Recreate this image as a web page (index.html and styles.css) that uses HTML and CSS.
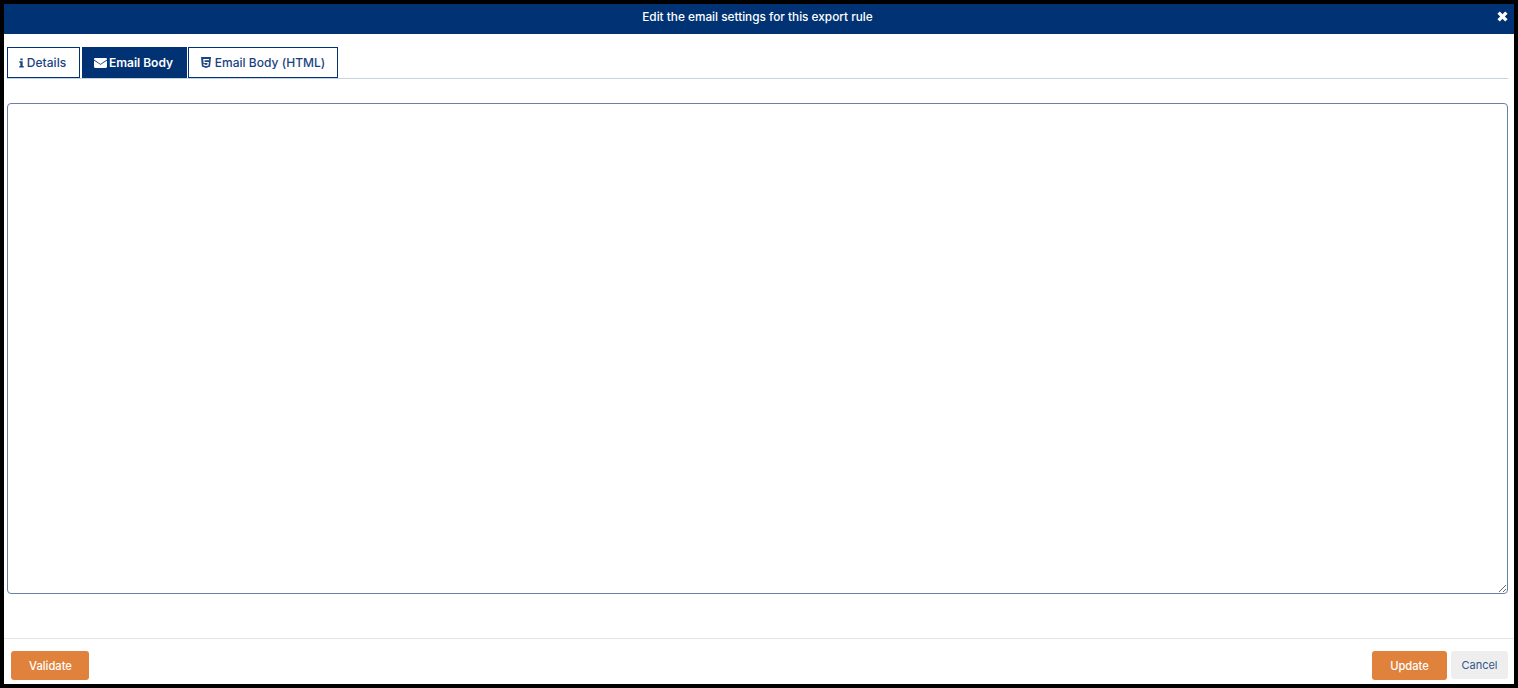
FILE: index.html
```html
<!DOCTYPE html>
<html lang="en">
<head>
<meta charset="utf-8">
<title>Edit the email settings</title>
<link rel="stylesheet" href="styles.css">
</head>
<body>
<div class="dialog">
  <header class="titlebar">
    <span class="title">Edit the email settings for this export rule</span>
    <svg class="close" viewBox="0 0 10 10" aria-hidden="true"><path d="M2 2 L8 8 M8 2 L2 8"/></svg>
  </header>
  <main class="content">
    <nav class="tabs">
      <a class="tab tab-details">
        <svg class="icon icon-info" viewBox="0 0 6 11" aria-hidden="true"><path d="M1.6 0h2.8v2.3H1.6z M0.4 3.4h4v5.7h1.2v1.9H0.4V9.1h1.2V5.3H0.4z"/></svg>
        Details
      </a>
      <a class="tab tab-active tab-body">
        <svg class="icon icon-mail" viewBox="0 0 13 10" aria-hidden="true"><path d="M1.2 0h10.6c.6 0 1.2.5 1.2 1.1v.5L6.5 6 0 1.6v-.5C0 .5.6 0 1.2 0z M0 2.5l6.5 4.3L13 2.5v6.3c0 .7-.6 1.2-1.2 1.2H1.2C.6 10 0 9.5 0 8.8z"/></svg>
        Email Body
      </a>
      <a class="tab tab-html">
        <svg class="icon icon-html" viewBox="0 0 10 11" aria-hidden="true"><path fill-rule="evenodd" d="M0 0h10L9.1 9.6 5 11 .9 9.6z M2.2 2l.4 4h3.9l-.1 1.5L5 7.9l-1.4-.4-.1-.8H2.3l.2 1.8L5 9.3l2.5-.8.4-3.6H3.7L3.6 3.3h4.5L8.2 2z"/></svg>
        Email Body (HTML)
      </a>
    </nav>
    <textarea class="editor"></textarea>
  </main>
  <footer class="footer">
    <button class="btn btn-primary btn-validate">Validate</button>
    <div class="footer-right">
      <button class="btn btn-primary btn-update">Update</button>
      <button class="btn btn-cancel">Cancel</button>
    </div>
  </footer>
</div>
</body>
</html>
```
FILE: styles.css
```css
* { box-sizing: border-box; }
html, body { margin: 0; height: 100%; overflow: hidden; }
body { font-family: Inter, "Liberation Sans", sans-serif; background: #000; }
.dialog {
  height: 688px;
  border: 4px solid #000;
  background: #fff;
  display: flex;
  flex-direction: column;
}
.titlebar {
  height: 30px;
  flex: none;
  background: #003274;
  color: #fff;
  font-size: 11.8px;
  font-weight: 500;
  display: flex;
  align-items: center;
  justify-content: center;
  padding: 0 3px 4px 0;
  position: relative;
}
.close {
  position: absolute;
  right: 5px;
  top: 6px;
  width: 13px;
  height: 13px;
  fill: none;
  stroke: #fff;
  stroke-width: 2.6;
}
.content {
  flex: 1;
  display: flex;
  flex-direction: column;
  padding: 13px 6px 0 3px;
}
.tabs {
  display: flex;
  gap: 2px;
  height: 32px;
  flex: none;
  border-bottom: 1px solid #c3d3e0;
}
.tab {
  height: 31px;
  display: flex;
  align-items: center;
  justify-content: center;
  gap: 3px;
  border: 1px solid #003274;
  color: #1a4380;
  background: #fff;
  font-size: 12px;
  font-weight: 500;
  letter-spacing: 0.07px;
}
.tab-details { width: 73px; padding-right: 2px; }
.tab-body { width: 105px; gap: 2px; padding-right: 2px; }
.tab-html { width: 150px; margin-left: -1px; gap: 4px; letter-spacing: 0.02px; }
.tab-active { background: #003274; color: #fff; font-weight: 600; letter-spacing: 0; }
.icon { fill: currentColor; flex: none; }
.icon-info { width: 5px; height: 10px; }
.icon-mail { width: 13px; height: 10px; }
.icon-html { width: 10px; height: 11px; }
.editor {
  display: block;
  width: 100%;
  height: 491px;
  margin-top: 24px;
  flex: none;
  border: 1px solid #6a80a6;
  border-radius: 4px;
  background: #fff;
  outline: none;
}
.footer {
  height: 46px;
  flex: none;
  border-top: 1px solid #e5e5e5;
  display: flex;
  justify-content: space-between;
  align-items: flex-start;
  padding: 12px 6px 0 7px;
}
.footer-right { display: flex; gap: 4px; }
.btn {
  height: 29px;
  border: 0;
  border-radius: 3px;
  padding: 0;
  font-family: inherit;
  font-size: 11.2px;
}
.btn-primary { background: #e0823c; color: #fff; font-weight: 500; }
.btn-validate { width: 78px; padding-left: 1px; }
.btn-update { width: 75px; }
.btn-cancel { width: 57px; height: 28px; background: #eeeeef; color: #33558a; font-size: 11px; }
```
